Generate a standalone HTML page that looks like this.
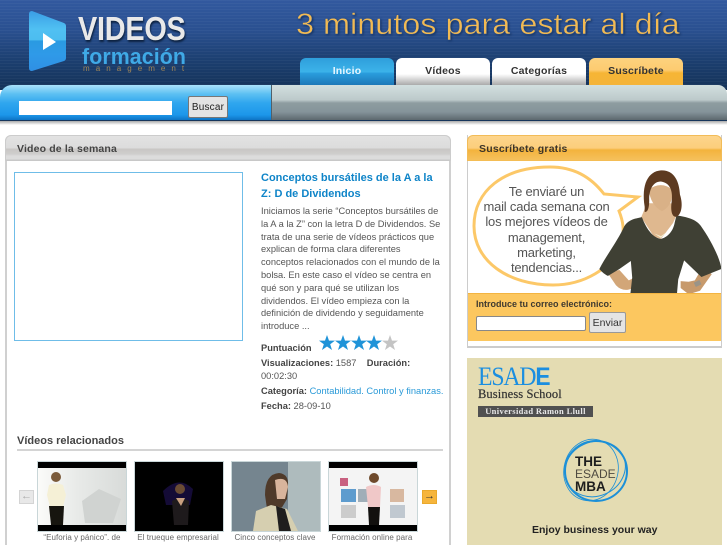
<!DOCTYPE html>
<html><head><meta charset="utf-8"><style>
html,body{margin:0;padding:0;width:727px;height:545px;overflow:hidden;background:#fff;font-family:"Liberation Sans",sans-serif}
div,span,svg{position:absolute}
span.i,b{position:static}
.t{white-space:nowrap}
.tab{top:58px;height:27px;width:94px;border-radius:6px 6px 0 0;text-align:center;font:bold 10.5px/26px "Liberation Sans",sans-serif;color:#333;letter-spacing:.2px}
.l{left:261px;white-space:nowrap;font-size:9.3px;line-height:13px;color:#555}
.l b{color:#444}
.c{top:533px;width:100px;text-align:center;font-size:8px;line-height:10px;color:#666;white-space:nowrap;letter-spacing:.05px}
.b{left:464px;width:165px;text-align:center;font-size:13px;letter-spacing:-.2px;color:#555;white-space:nowrap;line-height:16px}
</style></head><body>
<div style="left:0;top:0;width:727px;height:545px;overflow:hidden;filter:blur(.35px)">
<div style="left:0;top:0;width:727px;height:90px;background:linear-gradient(#32599f 0,#2a5090 30px,#1c3f70 60px,#143258 90px)"></div>
<div style="left:0;top:0;width:727px;height:90px;background:repeating-linear-gradient(rgba(255,255,255,.035) 0 1px,transparent 1px 3px)"></div>

<svg style="left:0;top:0" width="300" height="85">
<defs><linearGradient id="pl" x1="0" y1="0" x2="0" y2="1"><stop offset="0" stop-color="#3a9ee6"/><stop offset=".3" stop-color="#50c0f2"/><stop offset=".48" stop-color="#4cbdf0"/><stop offset=".5" stop-color="#2a9ae2"/><stop offset=".72" stop-color="#2f9ae8"/><stop offset="1" stop-color="#2f8fe4"/></linearGradient></defs>
<path d="M32 11L64 23Q66 24 66 26V58Q66 60 64 61L32 71Q29 71 29 68V14Q29 11 32 11Z" fill="url(#pl)"/>
<path d="M43 33L56 42L43 50Z" fill="#fff"/>
</svg>
<div class="t" style="left:78px;top:11px;font:bold 33px/36px 'Liberation Sans',sans-serif;color:#e9e9e9;transform-origin:0 0;transform:scaleX(.875);letter-spacing:-.3px;text-shadow:1px 2px 2px #0d2240">VIDEOS</div>
<div class="t" style="left:82px;top:45px;font:bold 22px/24px 'Liberation Sans',sans-serif;color:#3fa9e6;transform-origin:0 0;transform:scaleX(.97);letter-spacing:.1px">formación</div>
<div class="t" style="left:83px;top:64px;font:8px/9px 'Liberation Sans',sans-serif;color:#a08658;letter-spacing:6.05px">management</div>
<div class="t" style="left:296px;top:7px;font:30px/36px 'Liberation Sans',sans-serif;color:#f2ba52;transform-origin:0 0;transform:scaleX(1.08);-webkit-text-stroke:.45px #2a5090;text-shadow:1px 1px 2px #14305c">3 minutos para estar al día</div>

<div class="tab" style="left:300px;color:#e8f6ff;background:linear-gradient(#2f9fdc 0,#3cb3ea 14px,#2a9ede 15px,#1c78b8 27px)">Inicio</div>
<div class="tab" style="left:396px;background:linear-gradient(#fff 0,#fff 16px,#aaa 27px)">Vídeos</div>
<div class="tab" style="left:492px;background:linear-gradient(#fff 0,#fff 16px,#aaa 27px)">Categorías</div>
<div class="tab" style="left:589px;background:linear-gradient(#fdd27e 0,#fdcb70 12px,#f6b535 15px,#f4b43a 27px)">Suscríbete</div>

<div style="left:0;top:85px;width:271px;height:35px;border-radius:12px 0 0 0;background:linear-gradient(#a9e2fa 0,#5cc0f2 9px,#2fa6ee 18px,#1c96ea 30px,#0e74c4 35px)"></div>
<div style="left:271px;top:85px;width:456px;height:35px;border-left:1px solid #50606a;box-sizing:border-box;border-radius:0 9px 0 0;background:linear-gradient(#d2dfdf 0,#bcc9ca 15px,#8d9ca0 18px,#84939a 27px,#5c686e 35px)"></div>
<div style="left:0;top:120px;width:727px;height:1px;background:#17365c"></div>
<div style="left:0;top:121px;width:727px;height:4px;background:linear-gradient(#aaa,#fff)"></div>
<div style="left:19px;top:101px;width:153px;height:14px;background:#fff"></div>
<div class="t" style="left:188px;top:96px;width:38px;height:20px;border:1px solid #777;border-radius:2px;background:#e4e4e4;text-align:center;font:10px/21px 'Liberation Sans',sans-serif;color:#222;letter-spacing:.2px">Buscar</div>

<!-- left panel -->
<div style="left:5px;top:135px;width:446px;height:415px;box-sizing:border-box;border:2px solid #d0d0d0;border-top:0;border-radius:6px 6px 0 0"></div>
<div style="left:5px;top:135px;width:446px;height:26px;box-sizing:border-box;border-radius:6px 6px 0 0;border:1px solid #ccc;border-bottom:0;background:linear-gradient(#e2e2e2 0,#dcdcdc 12px,#c8c6c4 13px,#cfcecd 18px,#dcdcdc 20px,#dcdcdc 23px,#c8c8c8 24px)"></div>
<div class="t" style="left:17px;top:142px;font:bold 10.5px/14px 'Liberation Sans',sans-serif;color:#444;letter-spacing:.15px">Video de la semana</div>
<div style="left:14px;top:172px;width:227px;height:167px;border:1px solid #6fbde8;background:#fff"></div>

<div class="t" style="left:261px;top:171px;font:bold 11px/15.5px 'Liberation Sans',sans-serif;color:#0e84c8">Conceptos bursátiles de la A a la<br>Z: D de Dividendos</div>
<div class="l" style="top:205px;line-height:12.8px">Iniciamos la serie “Conceptos bursátiles de<br>la A a la Z” con la letra D de Dividendos. Se<br>trata de una serie de vídeos prácticos que<br>explican de forma clara diferentes<br>conceptos relacionados con el mundo de la<br>bolsa. En este caso el vídeo se centra en<br>qué son y para qué se utilizan los<br>dividendos. El vídeo empieza con la<br>definición de dividendo y seguidamente<br>introduce ...</div>
<div class="l" style="top:342px"><b>Puntuación</b></div>
<svg style="left:319px;top:335px" width="82" height="17">
<g fill="#1f93d8"><path d="M8 0L10 5.6H16L11.2 9.2L13 15L8 11.5L3 15L4.800 9.2L0 5.600H6Z"/>
<path transform="translate(16 0)" d="M8 0L10 5.6H16L11.2 9.2L13 15L8 11.5L3 15L4.800 9.2L0 5.600H6Z"/>
<path transform="translate(32 0)" d="M8 0L10 5.6H16L11.2 9.2L13 15L8 11.5L3 15L4.800 9.2L0 5.600H6Z"/>
<path transform="translate(47 0)" d="M8 0L10 5.6H16L11.2 9.2L13 15L8 11.5L3 15L4.800 9.2L0 5.600H6Z"/></g>
<path transform="translate(63 0)" fill="#c4c4c4" d="M8 0L10 5.6H16L11.2 9.2L13 15L8 11.5L3 15L4.800 9.2L0 5.600H6Z"/>
</svg>
<div class="l" style="top:357px"><b>Visualizaciones:</b> 1587 &nbsp; &nbsp;<b>Duración:</b></div>
<div class="l" style="top:370px">00:02:30</div>
<div class="l" style="top:385px"><b>Categoría:</b> <span class="i" style="color:#2a9ad8">Contabilidad. Control y finanzas.</span></div>
<div class="l" style="top:400px"><b>Fecha:</b> 28-09-10</div>

<div class="t" style="left:17px;top:434px;font:bold 11px/15px 'Liberation Sans',sans-serif;color:#444">Vídeos relacionados</div>
<div style="left:17px;top:449px;width:426px;height:2px;background:#d4d4d4"></div>

<div style="left:19px;top:490px;width:15px;height:14px;background:#e8e8e8;border:1px solid #d4d4d4;box-sizing:border-box;color:#aaa;font:bold 11px/11px 'Liberation Sans',sans-serif;text-align:center">←</div>
<div style="left:422px;top:490px;width:15px;height:14px;background:#f6b53c;border:1px solid #eaa92c;box-sizing:border-box;color:#333;font:bold 11px/11px 'Liberation Sans',sans-serif;text-align:center">→</div>

<svg style="left:37px;top:461px" width="90" height="71">
<defs><linearGradient id="th1" x1="0" x2="1" y1="0" y2="0"><stop offset="0" stop-color="#fbfbf9"/><stop offset=".45" stop-color="#e8eae8"/><stop offset="1" stop-color="#d8dbd9"/></linearGradient></defs>
<rect width="90" height="71" fill="#c9d6d8"/><rect x="1" y="1" width="88" height="69" fill="#000"/>
<rect x="1" y="7" width="88" height="57" fill="url(#th1)"/>
<path d="M45 40L62 28L84 38L76 62H48Z" fill="#d0d3d1"/>
<circle cx="19" cy="16" r="5" fill="#7a5a3a"/><path d="M12 24Q19 21 26 24L29 34L26 46H13L10 34Z" fill="#f5f0d6"/><path d="M12 45H27L26 64H14Z" fill="#17150f"/>
</svg>
<svg style="left:134px;top:461px" width="90" height="71">
<rect width="90" height="71" fill="#c9d6d8"/><rect x="1" y="1" width="88" height="69" fill="#000"/>
<path d="M29 30Q45 14 59 28L56 44H32Z" fill="#140b36"/>
<circle cx="46" cy="28" r="5" fill="#6a4c34"/><path d="M38 40Q46 35 55 40L54 64H40Z" fill="#1e1a1c"/><path d="M42 37H51L47 45Z" fill="#c8a080"/>
</svg>
<svg style="left:231px;top:461px" width="90" height="71">
<rect width="90" height="71" fill="#c9d6d8"/><rect x="1" y="1" width="88" height="69" fill="#75858f"/>
<rect x="57" y="1" width="32" height="69" fill="#aebbbd"/>
<path d="M34 34Q34 13 48 12Q58 13 57 25L56 38L50 48L36 48Z" fill="#4f3a2a"/><path d="M44 19Q56 15 57 26L54 38H46Z" fill="#d8b49c"/>
<path d="M22 70L25 50L40 44L56 48L67 70Z" fill="#d6cfb0"/><path d="M45 45L54 48L60 70H48Z" fill="#1f1e1e"/>
</svg>
<svg style="left:328px;top:461px" width="90" height="71">
<rect width="90" height="71" fill="#c9d6d8"/><rect x="1" y="1" width="88" height="69" fill="#000"/>
<rect x="1" y="7" width="88" height="57" fill="#f4f4f4"/>
<rect x="13" y="28" width="15" height="13" fill="#5e9cce"/><rect x="30" y="28" width="14" height="13" fill="#a0aeb8"/><rect x="62" y="28" width="14" height="13" fill="#d8b8a0"/>
<rect x="13" y="44" width="15" height="13" fill="#ccc"/><rect x="62" y="44" width="15" height="13" fill="#c0c8d0"/><rect x="12" y="17" width="8" height="8" fill="#c86080"/>
<circle cx="46" cy="17" r="5" fill="#6e4a2c"/><path d="M38 26Q46 22 53 26L52 46H40Z" fill="#f0c8c8"/><path d="M40 46H52L51 64H41Z" fill="#12100e"/>
</svg>
<div class="c" style="left:32px">“Euforia y pánico”. de</div>
<div class="c" style="left:128px">El trueque empresarial</div>
<div class="c" style="left:225px">Cinco conceptos clave</div>
<div class="c" style="left:322px">Formación online para</div>

<!-- right panel -->
<div style="left:467px;top:135px;width:255px;height:213px;box-sizing:border-box;border:1px solid #ccc;border-width:0 1px 2px 1px;background:#fff"></div>
<div style="left:467px;top:135px;width:255px;height:26px;box-sizing:border-box;border-radius:6px 6px 0 0;border:1px solid #f2bc58;border-bottom:0;background:linear-gradient(#fdd58c 0,#fcce7c 12px,#f3b33d 14px,#f5c05c 24px,#f2b441 26px)"></div>
<div class="t" style="left:479px;top:142px;font:bold 10.5px/14px 'Liberation Sans',sans-serif;color:#3c3428;letter-spacing:.2px">Suscríbete gratis</div>

<svg style="left:468px;top:161px" width="253" height="133">
<path d="M136 33C122 15 105 6 82 6C35 6 6 30 6 65C6 100 40 124 85 124C115 124 145 108 153 82C157 70 155 60 151 50L170 36L136 33Z" fill="none" stroke="#fcc868" stroke-width="3"/>
<g transform="translate(122 -1) scale(.346)">
<path d="M50 325L75 362Q90 378 110 375L145 365L152 345L128 340L112 348L85 318Z" fill="#d2a678"/>
<path d="M325 310L352 330L318 378L285 388L262 370L262 350L285 352L303 348Z" fill="#c79a6c"/>
<rect x="302" y="350" width="18" height="14" fill="#9a9488" transform="rotate(-25 311 357)"/>
<path d="M165 125L148 165L185 222L205 228L240 182L250 160L235 125Z" fill="#dfb88f"/>
<path d="M185 212L205 225L222 208L205 220Z" fill="#f4edd0"/>
<path d="M150 165C125 170 105 175 95 200C75 240 45 280 27 315C35 325 45 332 52 335L85 315L118 292L122 340L115 402H250L255 345L272 290L322 338L380 315C375 280 345 225 320 190C305 170 280 165 250 160L245 180C240 210 220 225 205 228C185 225 165 205 150 165Z" fill="#3f4034"/>
<path d="M170 85Q205 60 238 85Q242 130 208 148Q174 130 170 85Z" fill="#d9b187"/>
<path d="M158 135C148 70 168 33 205 30C242 28 258 60 260 100C270 130 264 158 250 164C238 166 232 150 236 120C240 90 232 66 205 62C182 62 172 85 171 110C172 135 168 152 158 150Z" fill="#5d3a20"/>
</g>
</svg>
<div class="b" style="top:184px">Te enviaré un</div>
<div class="b" style="top:199px">mail cada semana con</div>
<div class="b" style="top:214px">los mejores vídeos de</div>
<div class="b" style="top:230px">management,</div>
<div class="b" style="top:245px">marketing,</div>
<div class="b" style="top:260px">tendencias...</div>

<div style="left:468px;top:293px;width:253px;height:48px;background:#fcc75f;border-top:1px solid #f3b441;box-sizing:border-box"></div>
<div class="t" style="left:476px;top:298px;font:bold 9px/13px 'Liberation Sans',sans-serif;color:#3f3a30">Introduce tu correo electrónico:</div>
<div style="left:476px;top:316px;width:108px;height:13px;background:#fff;border:1px solid #888;border-radius:2px"></div>
<div style="left:589px;top:312px;width:35px;height:19px;background:#e4e4e4;border:1px solid #999;border-radius:2px;text-align:center;font:10.5px/20px 'Liberation Sans',sans-serif;color:#333">Enviar</div>

<!-- ad -->
<div style="left:467px;top:358px;width:255px;height:187px;background:#e4dcb2"></div>
<div class="t" style="left:478px;top:363px;font:26px/28px 'Liberation Serif',serif;color:#1b8ee0;letter-spacing:-1.2px;transform-origin:0 0;transform:scaleX(.91)">ESAD<b style="font-family:'Liberation Sans',sans-serif;font-size:25px">E</b></div>
<div class="t" style="left:478px;top:387px;font:12.5px/14px 'Liberation Serif',serif;color:#333;letter-spacing:.1px;-webkit-text-stroke:.2px #333">Business School</div>
<div class="t" style="left:478px;top:406px;width:115px;height:11px;background:#505050;text-align:center;font:bold 8.5px/11px 'Liberation Serif',serif;color:#e8e8e8;letter-spacing:.35px">Universidad Ramon Llull</div>
<svg style="left:558px;top:432px" width="80" height="74" fill="none" stroke="#1c90d8">
<ellipse cx="38" cy="39" rx="31" ry="30" stroke-width="2"/>
<ellipse cx="37" cy="37" rx="31" ry="27" stroke-width="1" transform="rotate(-25 37 37)"/>
<ellipse cx="33" cy="38" rx="27" ry="31" stroke-width=".8" transform="rotate(15 33 38)"/>
</svg>
<div class="t" style="left:575px;top:455px;font:bold 13.5px/14px 'Liberation Sans',sans-serif;color:#1e1e1e">THE</div>
<div class="t" style="left:575px;top:467px;font:12px/14px 'Liberation Sans',sans-serif;color:#4e4a40">ESADE</div>
<div class="t" style="left:575px;top:480px;font:bold 13.5px/14px 'Liberation Sans',sans-serif;color:#1e1e1e">MBA</div>
<div class="t" style="left:532px;top:523px;font:bold 10.5px/14px 'Liberation Sans',sans-serif;color:#222">Enjoy business your way</div>
</div>
</body></html>
